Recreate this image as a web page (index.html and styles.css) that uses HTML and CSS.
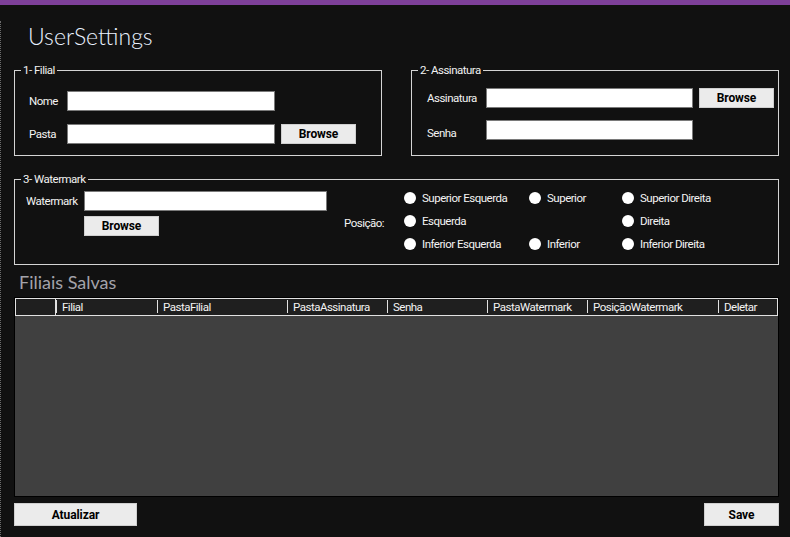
FILE: index.html
```html
<!DOCTYPE html>
<html lang="pt">
<head>
<meta charset="utf-8">
<title>UserSettings</title>
<link rel="stylesheet" href="styles.css">
</head>
<body>
<div class="topbar"></div>
<div class="window">
  <main class="content">
    <h1 class="title">UserSettings</h1>

    <div class="groups-row">
      <fieldset class="group">
        <legend>1- Filial</legend>
        <div class="form-grid filial-grid">
          <label class="lbl">Nome</label>
          <input class="txt" type="text">
          <span></span>
          <label class="lbl">Pasta</label>
          <input class="txt" type="text">
          <button class="btn">Browse</button>
        </div>
      </fieldset>

      <fieldset class="group">
        <legend>2- Assinatura</legend>
        <div class="form-grid assin-grid">
          <label class="lbl">Assinatura</label>
          <input class="txt" type="text">
          <button class="btn">Browse</button>
          <label class="lbl lbl-low">Senha</label>
          <input class="txt" type="text">
          <span></span>
        </div>
      </fieldset>
    </div>

    <fieldset class="group group-wide">
      <legend>3- Watermark</legend>
      <div class="wm-body">
        <div class="wm-form">
          <label class="lbl">Watermark</label>
          <input class="txt" type="text">
          <span></span>
          <button class="btn">Browse</button>
        </div>
        <span class="lbl pos-label">Posição:</span>
        <div class="radios">
          <label class="radio"><span class="dot"></span>Superior Esquerda</label>
          <label class="radio"><span class="dot"></span>Superior</label>
          <label class="radio"><span class="dot"></span>Superior Direita</label>
          <label class="radio"><span class="dot"></span>Esquerda</label>
          <span></span>
          <label class="radio"><span class="dot"></span>Direita</label>
          <label class="radio"><span class="dot"></span>Inferior Esquerda</label>
          <label class="radio"><span class="dot"></span>Inferior</label>
          <label class="radio"><span class="dot"></span>Inferior Direita</label>
        </div>
      </div>
    </fieldset>

    <h2 class="section-title">Filiais Salvas</h2>
    <div class="datagrid">
      <div class="dg-header">
        <div class="dg-corner"></div>
        <div class="dg-col w-filial">Filial</div>
        <div class="dg-col w-130">PastaFilial</div>
        <div class="dg-col w-100">PastaAssinatura</div>
        <div class="dg-col w-100">Senha</div>
        <div class="dg-col w-100">PastaWatermark</div>
        <div class="dg-col w-131">PosiçãoWatermark</div>
        <div class="dg-col w-rest">Deletar</div>
      </div>
      <div class="dg-body"></div>
    </div>

    <div class="actions">
      <button class="btn btn-lg btn-atualizar">Atualizar</button>
      <button class="btn btn-lg btn-save">Save</button>
    </div>
  </main>
</div>
</body>
</html>
```

FILE: styles.css
```css
* { box-sizing: border-box; }

html, body {
  margin: 0;
  padding: 0;
  background: #111111;
  height: 100%;
}

body {
  font-family: "Roboto", "Liberation Sans", Arial, sans-serif;
  font-size: 11.5px;
  color: #f2f2f2;
  overflow: hidden;
}

.topbar {
  height: 5px;
  background: #7e4099;
}

.window {
  border-left: 1px dotted #6c6c6c;
  height: 532px;
}

.content {
  margin-left: 13px;
  width: 765px;
}

.title {
  margin: 16px 0 0 0;
  padding-left: 14px;
  font-family: "Lato", "Open Sans", sans-serif;
  font-weight: 300;
  font-size: 23px;
  line-height: 30px;
  color: #eaf2ff;
}

.groups-row {
  display: flex;
  gap: 29px;
  margin-top: 12px;
}

.group {
  margin: 0;
  padding: 0;
  border: 1px solid #d4d4d4;
  width: 368px;
  height: 93px;
  min-width: 0;
}

.group legend {
  margin-left: 6px;
  padding: 0 2px;
  font-size: 11.5px;
  line-height: 14px;
  letter-spacing: -0.5px;
  color: #f2f2f2;
}

.lbl {
  font-size: 11.5px;
  line-height: 14px;
  letter-spacing: -0.5px;
  color: #f4f4f4;
  white-space: nowrap;
}

.lbl-low {
  padding-top: 6px;
}

.form-grid {
  display: grid;
  grid-auto-rows: 20px;
  column-gap: 6px;
  align-items: center;
}

.filial-grid {
  grid-template-columns: 32px 208px 75px;
  row-gap: 13px;
  padding: 14px 0 0 14px;
}

.assin-grid {
  grid-template-columns: 53px 207px 75px;
  row-gap: 12px;
  padding: 11px 0 0 15px;
}

.txt {
  appearance: none;
  margin: 0;
  height: 20px;
  width: 100%;
  border: 1px solid #7a7a7a;
  background: #ffffff;
  padding: 0 3px;
  font-family: inherit;
  font-size: 11px;
}

.btn {
  margin: 0;
  padding: 0;
  height: 20px;
  width: 75px;
  border: 1px solid #cfcfcf;
  background: #ebebeb;
  color: #000000;
  font-family: "Roboto", "Liberation Sans", Arial, sans-serif;
  font-weight: bold;
  font-size: 12px;
  letter-spacing: -0.1px;
}

.group-wide {
  width: 765px;
  margin-top: 16px;
}

.wm-body {
  display: flex;
  align-items: flex-start;
  padding-left: 11px;
}

.wm-form {
  display: grid;
  grid-template-columns: 58px 243px;
  grid-auto-rows: 20px;
  row-gap: 5px;
  align-items: center;
  margin-top: 5px;
}

.pos-label {
  width: 60px;
  margin-left: 17px;
  margin-top: 30px;
}

.radios {
  display: grid;
  grid-template-columns: 125px 93px auto;
  grid-auto-rows: 23px;
  align-items: center;
}

.radio {
  display: flex;
  align-items: center;
  gap: 6px;
  font-size: 11.5px;
  line-height: 14px;
  letter-spacing: -0.5px;
  color: #f4f4f4;
  white-space: nowrap;
}

.dot {
  width: 12px;
  height: 12px;
  border-radius: 50%;
  background: #ffffff;
  flex: none;
}

.section-title {
  margin: 6px 0 0 0;
  padding-left: 5px;
  font-family: "Lato", "Open Sans", sans-serif;
  font-weight: 400;
  font-size: 18px;
  line-height: 22px;
  color: #a3a3aa;
}

.datagrid {
  margin-top: 4px;
  height: 200px;
  border: 1px solid #000000;
  background: #404040;
  display: flex;
  flex-direction: column;
}

.dg-header {
  height: 18px;
  flex: none;
  display: flex;
  border: 1px solid #e2e2e2;
  background: #1f1f1f;
}

.dg-corner {
  width: 40px;
  border-right: 1px solid #e2e2e2;
  flex: none;
}

.dg-col {
  position: relative;
  flex: none;
  padding-left: 6px;
  font-size: 11.5px;
  line-height: 16px;
  letter-spacing: -0.5px;
  color: #f4f4f4;
  white-space: nowrap;
}

.dg-col::before {
  content: "";
  position: absolute;
  left: 0;
  top: 1px;
  width: 1px;
  height: 13px;
  background: #e2e2e2;
}

.w-filial { width: 101px; }
.w-130 { width: 130px; }
.w-100 { width: 100px; }
.w-131 { width: 131px; }
.w-rest { flex: 1; }

.dg-body {
  flex: 1;
}

.actions {
  display: flex;
  justify-content: space-between;
  margin-top: 6px;
}

.btn-lg {
  height: 23px;
}

.btn-atualizar {
  width: 123px;
}

.btn-save {
  width: 75px;
}
```
